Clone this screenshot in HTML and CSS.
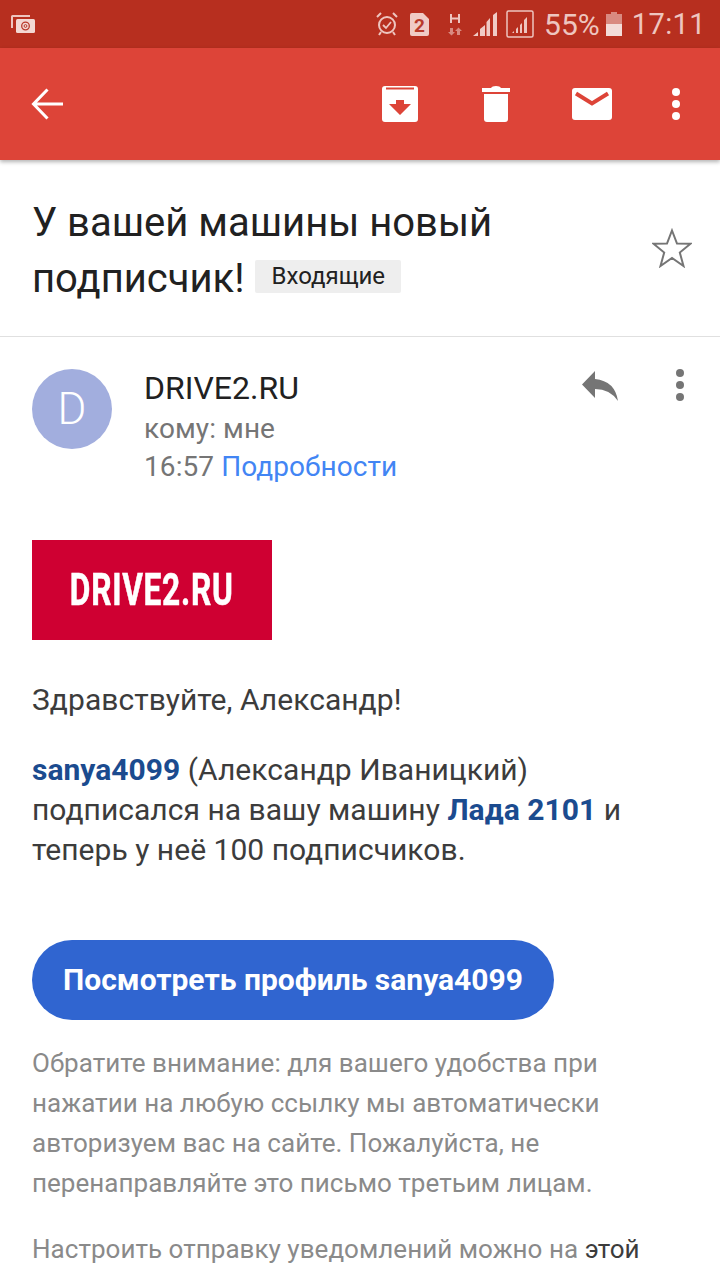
FILE: index.html
```html
<!DOCTYPE html>
<html lang="ru">
<head>
<meta charset="utf-8">
<title>Письмо</title>
<link rel="stylesheet" href="styles.css">
</head>
<body>
<div class="phone">
  <div class="status">
    <svg class="st-mail" width="24" height="18" viewBox="0 0 24 18"><path d="M0 13V1.500Q0 0 1.500 0H19V2H2V13Z" fill="#eec5bf"/><rect x="5" y="4" width="19" height="14" rx="1.500" fill="#f3d8d3"/><circle cx="14.500" cy="11" r="3.800" fill="none" stroke="#b93a2a" stroke-width="1.300"/><circle cx="14.500" cy="11" r="1.400" fill="none" stroke="#b93a2a" stroke-width="1"/></svg>
    <div class="st-right">
      <svg class="st-alarm" width="22" height="24" viewBox="0 0 22 24"><circle cx="11" cy="13" r="8" fill="none" stroke="#eec5bf" stroke-width="2"/><path d="M7 13l3 3 5-6" fill="none" stroke="#eec5bf" stroke-width="1.800"/><path d="M1 5l4-4M21 5l-4-4M5 20l-2 3M17 20l2 3" stroke="#eec5bf" stroke-width="2"/></svg>
      <svg class="st-sim" width="19" height="23" viewBox="0 0 19 23"><path d="M2 0H13L19 6V21Q19 23 17 23H2Q0 23 0 21V2Q0 0 2 0Z" fill="#f0cbc5"/><text class="st-sim-num" x="9.500" y="18.500">2</text></svg>
      <svg class="st-h" width="14" height="23" viewBox="0 0 14 23"><path d="M3 1V10M11 1V10M3 5.500H11" stroke="#eec5bf" stroke-width="2" fill="none"/><path d="M2 15h3v4h2l-3.500 3.500L0 19h2zM9 22v-4H7l3.500-3.500L14 18h-2v4z" fill="#d98a80"/></svg>
      <svg class="st-signal" width="24" height="24" viewBox="0 0 24 24"><path d="M0 24L5 20V24ZM7 24V17L12 13V24ZM13.500 24V10L17 6V24ZM20 24V3L24 0V24Z" fill="#f0cbc5"/></svg>
      <svg class="st-signal2" width="28" height="28" viewBox="0 0 28 28"><rect x="1" y="1" width="26" height="26" rx="1.500" fill="none" stroke="#eec5bf" stroke-width="1.500"/><path d="M6 23L8 21V23ZM10 23V19L12 17V23ZM14 23V15L16 13V23ZM18 23V10L21 7V23Z" fill="#eec5bf"/></svg>
      <span class="st-text st-pct">55%</span>
      <svg class="st-batt" width="16" height="24" viewBox="0 0 16 24"><path d="M5 0H11V2H16V12H0V2H5Z" fill="#d98a80"/><rect y="12" width="16" height="12" fill="#f3dcd8"/></svg>
      <span class="st-text st-time">17:11</span>
    </div>
  </div>

  <header class="toolbar">
    <svg class="tb-back" width="32" height="32" viewBox="0 0 32 32"><path d="M16.500 1.500L2.500 16L16.500 30.500M2.500 16H32" fill="none" stroke="#fff" stroke-width="3"/></svg>
    <div class="tb-actions">
      <svg class="tb-archive" width="36" height="36" viewBox="0 0 36 36"><path d="M3 0H33Q36 0 36 3V33Q36 36 33 36H3Q0 36 0 33V3Q0 0 3 0Z" fill="#fff"/><path d="M4 2.500H32" stroke="#dd4438" stroke-width="2"/><path d="M14 14H22V18H29L18 29L7 18H14Z" fill="#dd4438"/></svg>
      <svg class="tb-trash" width="28" height="36" viewBox="0 0 28 36"><path d="M0 2H9Q10 0 14 0Q18 0 19 2H28V6H0Z" fill="#fff"/><path d="M2 8H26V33Q26 36 23 36H5Q2 36 2 33Z" fill="#fff"/></svg>
      <svg class="tb-mail" width="40" height="32" viewBox="0 0 40 32"><rect width="40" height="32" rx="3" fill="#fff"/><path d="M4 5.500L20 15.500L36 5.500" fill="none" stroke="#dd4438" stroke-width="4"/></svg>
      <svg class="tb-more" width="8" height="32" viewBox="0 0 8 32"><circle cx="4" cy="4" r="4" fill="#fff"/><circle cx="4" cy="16" r="4" fill="#fff"/><circle cx="4" cy="28" r="4" fill="#fff"/></svg>
    </div>
  </header>

  <section class="subject">
    <h1 class="subject-title">У вашей машины новый подписчик!<span class="chip">Входящие</span></h1>
    <svg class="star" width="40" height="40" viewBox="0 0 40 40"><path d="M20 2.500L25 15.500L38.500 15.800L27.800 24.500L31.500 38L20 30L8.500 38L12.200 24.500L1.500 15.800L15 15.500Z" fill="none" stroke="#757575" stroke-width="2"/></svg>
  </section>

  <section class="sender">
    <div class="avatar">D</div>
    <div class="sender-info">
      <div class="sender-name">DRIVE2.RU</div>
      <div class="sender-meta">кому: мне</div>
      <div class="sender-meta">16:57 <span class="details">Подробности</span></div>
    </div>
    <div class="sender-actions">
      <svg class="reply" width="36" height="30" viewBox="0 0 36 30"><path d="M13 0L0 13.500L13 27V18Q28 18 36 30Q33 10 13 8Z" fill="#757575"/></svg>
      <svg class="more-grey" width="8" height="32" viewBox="0 0 8 32"><circle cx="4" cy="4" r="4" fill="#757575"/><circle cx="4" cy="16" r="4" fill="#757575"/><circle cx="4" cy="28" r="4" fill="#757575"/></svg>
    </div>
  </section>

  <main class="body">
    <div class="logo"><span class="logo-text">DRIVE2.RU</span></div>
    <p class="greet">Здравствуйте, Александр!</p>
    <p class="para"><b class="link">sanya4099</b> (Александр Иваницкий) подписался на вашу машину <b class="link">Лада 2101</b> и теперь у неё 100 подписчиков.</p>
    <a class="cta">Посмотреть профиль sanya4099</a>
    <p class="note">Обратите внимание: для вашего удобства при нажатии на любую ссылку мы автоматически авторизуем вас на сайте. Пожалуйста, не перенаправляйте это письмо третьим лицам.</p>
    <p class="note note-last">Настроить отправку уведомлений можно на <span class="dark">этой странице</span></p>
  </main>
</div>
</body>
</html>
```
FILE: styles.css
```css
* { box-sizing: border-box; }
html, body { margin: 0; padding: 0; background: #fff; }
.phone { width: 720px; height: 1280px; overflow: hidden; font-family: Roboto, "Noto Sans", sans-serif; color: #212121; }

.status { height: 48px; background: #b72f1f; display: flex; align-items: center; justify-content: space-between; padding: 0 14px 0 11px; }
.st-right { display: flex; align-items: center; }
.st-text { font-size: 29px; color: #eec5bf; letter-spacing: .4px; }
.st-pct { font-size: 30px; letter-spacing: 0; }
.st-alarm { margin-right: 12px; }
.st-sim { margin-right: 19px; }
.st-sim-num { font: bold 19px Roboto, sans-serif; fill: #b93a2a; text-anchor: middle; }
.st-h { margin-right: 11px; }
.st-signal { margin-right: 9px; }
.st-signal2 { margin-right: 10px; }
.st-batt { margin: 0 10px 0 6px; }

.toolbar { height: 112px; background: #dd4438; display: flex; align-items: center; justify-content: space-between; padding: 0 40px 0 31px; box-shadow: 0 2px 4px rgba(0,0,0,.3); position: relative; }
.tb-actions { display: flex; align-items: center; }
.tb-archive { margin-right: 64px; }
.tb-trash { margin-right: 62px; }
.tb-mail { margin-right: 60px; }

.subject { height: 177px; border-bottom: 1px solid #e0e0e0; padding: 35px 28px 0 32px; display: flex; justify-content: space-between; }
.subject-title { margin: 0; width: 500px; font-weight: 400; font-size: 40px; line-height: 56px; color: #212121; }
.chip { display: inline-block; margin-left: 10px; padding: 0 16px 0 17px; height: 33px; line-height: 33px; background: #eeeeee; font-size: 24px; vertical-align: 8px; border-radius: 2px; }
.star { margin-top: 33px; }

.sender { display: flex; padding: 32px 0 0 32px; height: 203px; }
.avatar { width: 80px; height: 80px; border-radius: 50%; background: #a2aede; color: #fff; font-size: 44px; font-weight: 300; display: flex; align-items: center; justify-content: center; flex-shrink: 0; }
.sender-info { margin-left: 32px; width: 432px; }
.sender-name { font-size: 32px; line-height: 38px; margin-bottom: 3px; color: #212121; }
.sender-meta { font-size: 28px; line-height: 38px; color: #757575; letter-spacing: .08px; }
.details { color: #4285f4; }
.sender-actions { display: flex; align-items: flex-start; }
.reply { margin: 2px 0 0 6px; }
.more-grey { margin-left: 58px; }

.body { padding: 0 32px; }
.logo { width: 240px; height: 100px; background: #cf0032; display: flex; align-items: center; justify-content: center; }
.logo-text { color: #fff; font-weight: 700; font-size: 44px; transform: scaleX(.72); letter-spacing: 1px; filter: blur(.7px); -webkit-text-stroke: .6px #fff; white-space: nowrap; }
.greet { margin: 40px 0 0; font-size: 30px; line-height: 40px; color: #3c3c3c; letter-spacing: .04px; }
.para { margin: 30px 0 0; font-size: 30px; line-height: 40px; color: #3c3c3c; letter-spacing: .03px; }
.link { color: #1b4b8f; font-weight: 700; }
.cta { display: block; width: 522px; height: 80px; margin-top: 70px; border-radius: 40px; background: #3065d0; color: #fff; font-weight: 700; font-size: 30px; line-height: 80px; text-align: center; }
.note { margin: 23px 0 0; font-size: 26px; line-height: 40px; color: #8a8a8a; letter-spacing: .03px; }
.note-last { margin-top: 26px; }
.dark { color: #3c3c3c; }
```
